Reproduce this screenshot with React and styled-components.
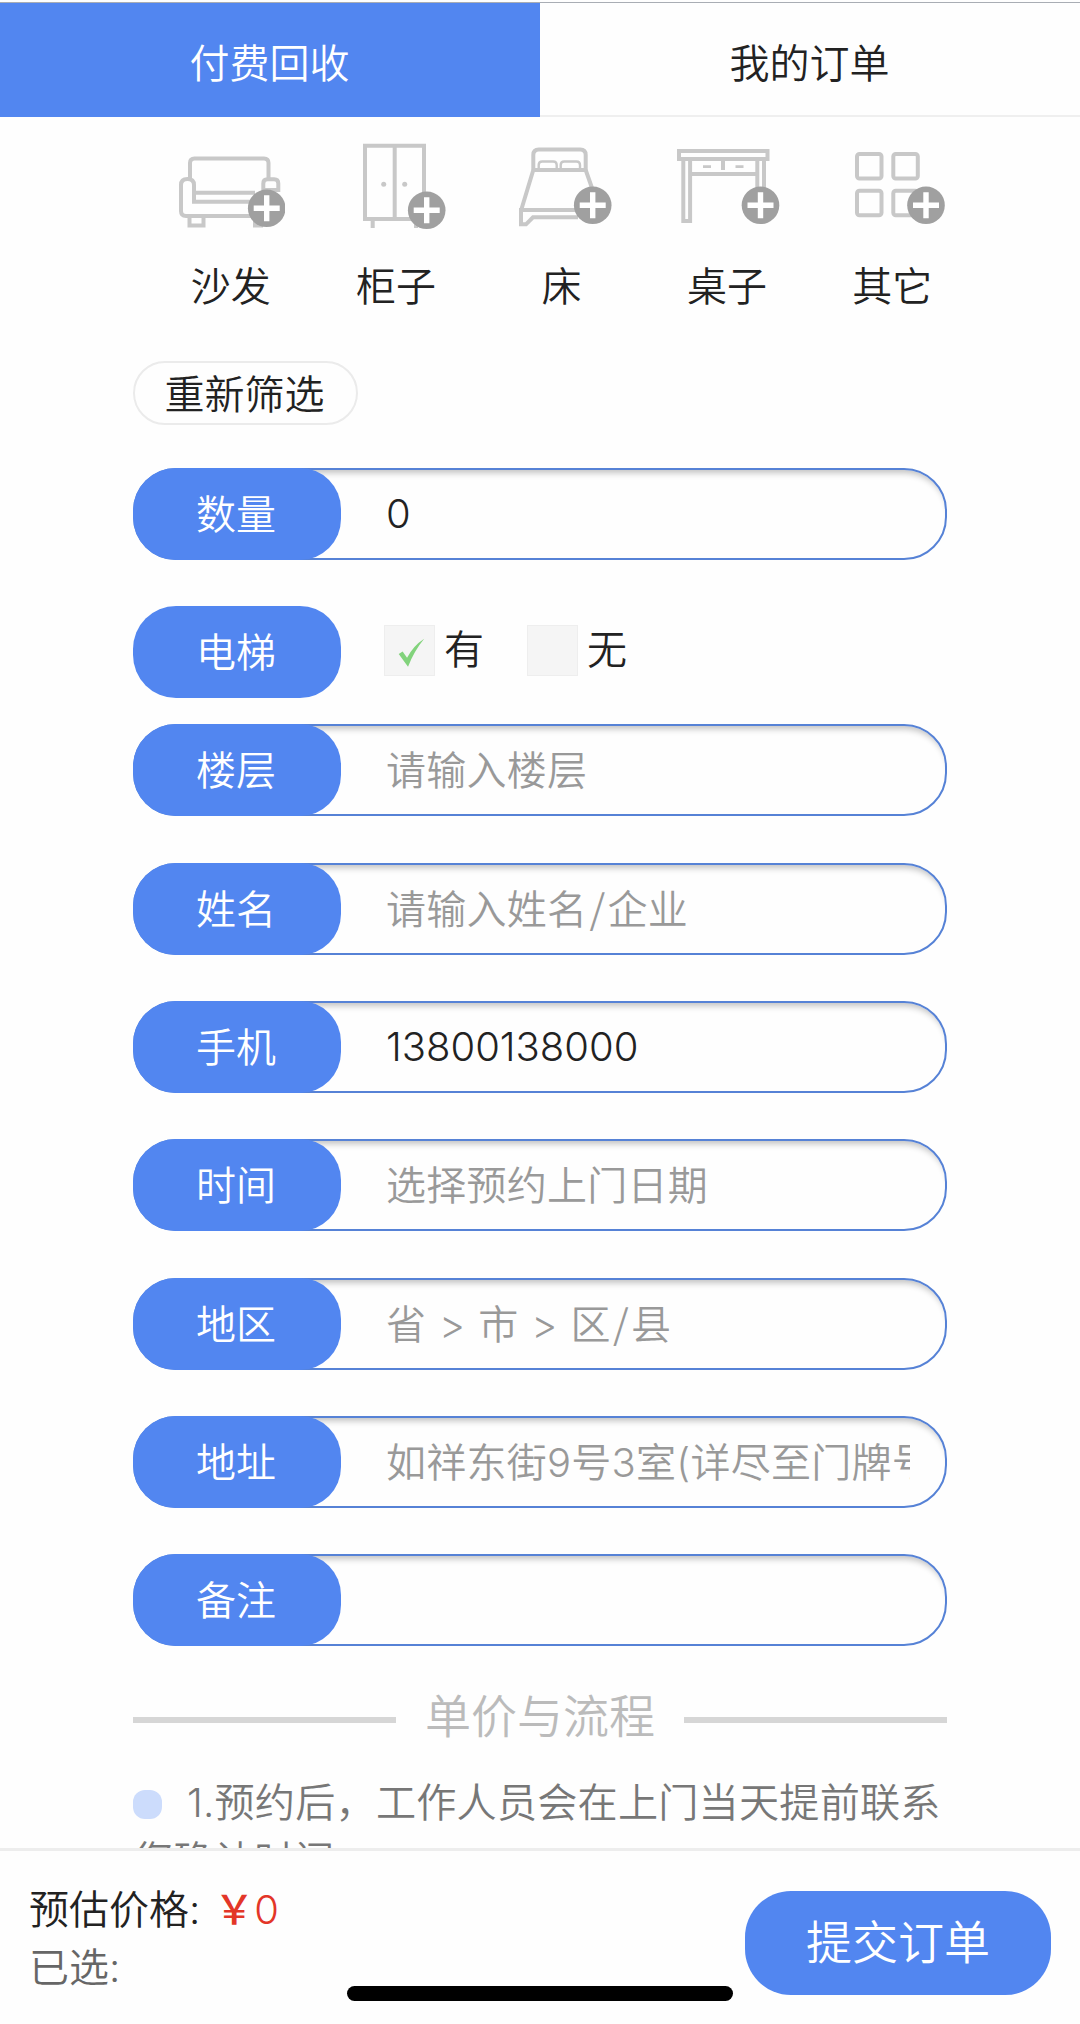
import styled, { createGlobalStyle } from 'styled-components';

const colors = {
  blue: '#5286f0',
  border: '#5682d6',
  text: '#222222',
  muted: '#999999',
  icon: '#c8c8c8',
  badge: '#a0a0a0'
};

const GlobalStyle = createGlobalStyle`
  * {
    box-sizing: border-box;
  }

  body {
    margin: 0;
    background: #fefefe;
    color: ${colors.text};
    font-family: Inter, 'Noto Sans CJK SC', sans-serif;
    font-size: 40px;
    font-weight: 350;
    line-height: 58px;
  }
`;

const Page = styled.div`
  display: flex;
  flex-direction: column;
  height: 2024px;
  overflow: hidden;
`;

const Tabs = styled.nav`
  display: flex;
  flex-shrink: 0;
  height: 115px;
  margin-top: 2px;
  border-top: 1px solid #a9adb4;
`;

const Tab = styled.div`
  flex: 1;
  display: flex;
  align-items: center;
  justify-content: center;
  padding: 9px 1px 0 0;
  background: ${props => (props.$active ? colors.blue : 'transparent')};
  color: ${props => (props.$active ? '#ffffff' : colors.text)};
  border-bottom: 2px solid ${props => (props.$active ? colors.blue : '#efefef')};
`;

const Content = styled.main`
  flex: 1;
  min-height: 0;
  overflow: hidden;
  padding: 0 133px;
`;

const Categories = styled.div`
  display: flex;
  width: 827px;
  margin: 23px 0 0 14px;
`;

const Category = styled.div`
  flex: 1;
  display: flex;
  flex-direction: column;
  align-items: center;
  gap: 28px;
`;

const CategoryName = styled.span`
  padding-left: 2px;
`;

const Icon = styled.svg`
  width: 110px;
  height: 90px;
  fill: none;
  stroke: ${colors.icon};
  stroke-width: 4;
`;

const FilterButton = styled.div`
  display: flex;
  align-items: center;
  justify-content: center;
  width: 225px;
  height: 64px;
  margin-top: 45px;
  padding: 3px 2px 0 0;
  border: 2px solid #ebebeb;
  border-radius: 32px;
`;

const Form = styled.div`
  margin-top: 43px;
`;

const Field = styled.div`
  display: flex;
  width: 813.5px;
  height: 92px;
  margin-bottom: ${props => props.$gap || '46.35px'};
  border-radius: 43px;
  ${props => !props.$plain && `
    border: 2px solid ${colors.border};
    box-shadow: inset 0 8px 6px -5px rgba(0, 0, 0, 0.24);
  `}
`;

const FieldLabel = styled.div`
  display: flex;
  align-items: center;
  justify-content: center;
  flex-shrink: 0;
  width: 208px;
  height: 92px;
  margin: ${props => (props.$plain ? '0' : '-2px 0 0 -2px')};
  padding: 2px 2px 0 0;
  border-radius: 43px 41px 41px 43px;
  background: ${colors.blue};
  color: #ffffff;
`;

const FieldValue = styled.div`
  width: 524px;
  margin-left: 45px;
  line-height: ${props => (props.$placeholder ? '90px' : '87px')};
  white-space: nowrap;
  overflow: hidden;
  color: ${props => (props.$placeholder ? colors.muted : colors.text)};
  letter-spacing: ${props => (props.$placeholder ? '0.25px' : '0')};
  word-spacing: ${props => (props.$placeholder ? '1.3px' : '0')};
`;

const Slash = styled.span`
  padding: 0 2.2px;
  font-family: 'Noto Sans CJK SC', sans-serif;
  line-height: 1;
`;

const Options = styled.div`
  display: flex;
  align-items: center;
  gap: 43px;
  margin: -4px 0 0 43px;
`;

const Option = styled.div`
  display: flex;
  align-items: center;
  gap: 9px;
`;

const CheckBox = styled.svg`
  width: 51px;
  height: 51px;
  border: 1px solid #eeeeee;
  background: #f5f5f5;
`;

const SectionTitle = styled.div`
  display: flex;
  align-items: center;
  justify-content: space-between;
  width: 814px;
  height: 60px;
  margin-top: -7px;
  color: #bbbbbb;
  font-size: 46px;
`;

const Rule = styled.div`
  width: 263px;
  height: 6px;
  margin-top: 9px;
  background: #d6d6d6;
`;

const Note = styled.p`
  width: 820px;
  margin: 28px 0 0;
  color: #777777;
  font-size: 40.15px;
  letter-spacing: 0.2px;
`;

const Bullet = styled.span`
  display: inline-block;
  width: 29px;
  height: 29px;
  margin-right: 25px;
  border-radius: 12px;
  background: #ccdcfc;
  vertical-align: -2px;
`;

const Footer = styled.footer`
  position: relative;
  display: flex;
  justify-content: space-between;
  flex-shrink: 0;
  height: 176px;
  padding: 30px 29px 0;
  border-top: 3px solid #ededed;
  background: #fefefe;
`;

const Selected = styled.div`
  color: #666666;
`;

const Price = styled.span`
  margin-left: 14px;
  color: #e33628;
`;

const Yen = styled.span`
  font-weight: 450;
`;

const SubmitButton = styled.div`
  display: flex;
  align-items: center;
  justify-content: center;
  width: 306px;
  height: 104px;
  margin-top: 10px;
  padding-bottom: 2px;
  border-radius: 46px;
  background: ${colors.blue};
  color: #ffffff;
  font-size: 46px;
`;

const HomeIndicator = styled.div`
  position: absolute;
  left: 347px;
  bottom: 23px;
  width: 386px;
  height: 15px;
  border-radius: 8px;
  background: #000000;
`;

const AddBadge = ({ x, y }) => (
  <g stroke="none">
    <circle cx={x} cy={y} r="18.8" fill={colors.badge} />
    <path d={`M${x - 13} ${y}h26M${x} ${y - 13}v26`} stroke="#fff" strokeWidth="5.4" />
  </g>
);

const categories = [
  {
    name: '沙发',
    icon: (
      <Icon viewBox="0 0 110 90">
        <path d="M15 39V23q0-4.500 4.500-4.500h69.500q4.500 0 4.500 4.500V39" />
        <path d="M80 76H11q-5 0-5-5V45q0-6 6.500-6t6.500 6V61.700H80M19 52.700H80" />
        <path d="M88.300 50V43.500q0-4.200 4.200-4.200h6.600q4.200 0 4.200 4.200V50z" />
        <path d="M14.500 77v8.500h14V77M80 77v8.500h8" />
        <AddBadge x={91.7} y={68.3} />
      </Icon>
    )
  },
  {
    name: '柜子',
    icon: (
      <Icon viewBox="0 0 110 90">
        <path d="M25 5.700H84V79H25zM54.700 5.700V79M32.700 80v8M76 80v8" />
        <circle cx="43.7" cy="44.300" r="2.500" fill={colors.icon} stroke="none" />
        <circle cx="64.7" cy="44.300" r="2.500" fill={colors.icon} stroke="none" />
        <AddBadge x={86.7} y={70.3} />
      </Icon>
    )
  },
  {
    name: '床',
    icon: (
      <Icon viewBox="0 0 110 90">
        <path d="M27.300 30V15q0-5.500 5.500-5.500h41.400q5.500 0 5.500 5.500V30M27.300 30H79.700" />
        <path d="M32.700 30v-5q0-3.500 3.500-3.500h11q3.500 0 3.500 3.500v5M54.700 30v-5q0-3.500 3.500-3.500h12.300q3.500 0 3.500 3.500v5" strokeWidth="2.400" />
        <path d="M27.300 30L15.500 69M79.700 30l7 20M70 70H15v14.300h5l7-7H72" />
        <AddBadge x={86.7} y={65.3} />
      </Icon>
    )
  },
  {
    name: '桌子',
    icon: (
      <Icon viewBox="0 0 110 90">
        <path d="M8 11H96.500v8H8zM12.300 19V81h6.800V19M86.300 19V50M93 19V50M19 34H86M52 19v11" />
        <path d="M32 26.700h8M64.500 26.700h8" strokeWidth="2.800" />
        <AddBadge x={89.5} y={65.3} />
      </Icon>
    )
  },
  {
    name: '其它',
    icon: (
      <Icon viewBox="0 0 110 90">
        <rect x="21" y="14" width="24.500" height="24.500" rx="2.500" />
        <rect x="57.300" y="14" width="24.500" height="24.500" rx="2.500" />
        <rect x="21" y="50.700" width="24.500" height="24.500" rx="2.500" />
        <rect x="57.300" y="50.700" width="24.500" height="24.500" rx="2.500" />
        <AddBadge x={90} y={65.3} />
      </Icon>
    )
  }
];

const fields = [
  { label: '楼层', placeholder: '请输入楼层' },
  { label: '姓名', placeholder: <>请输入姓名<Slash>/</Slash>企业</> },
  { label: '手机', value: '13800138000' },
  { label: '时间', placeholder: '选择预约上门日期' },
  { label: '地区', placeholder: <>省 &gt; 市 &gt; 区<Slash>/</Slash>县</> },
  { label: '地址', placeholder: '如祥东街9号3室(详尽至门牌号)' },
  { label: '备注' }
];

const FormField = ({ label, value, placeholder }) => (
  <Field>
    <FieldLabel>{label}</FieldLabel>
    <FieldValue $placeholder={!value}>{value || placeholder}</FieldValue>
  </Field>
);

const App = () => {
  return (
    <>
      <GlobalStyle />
      <Page>
        <Tabs>
          <Tab $active>付费回收</Tab>
          <Tab>我的订单</Tab>
        </Tabs>

        <Content>
          <Categories>
            {categories.map(category => (
              <Category key={category.name}>
                {category.icon}
                <CategoryName>{category.name}</CategoryName>
              </Category>
            ))}
          </Categories>

          <FilterButton>重新筛选</FilterButton>

          <Form>
            <FormField label="数量" value="0" />
            <Field $plain $gap="26px">
              <FieldLabel $plain>电梯</FieldLabel>
              <Options>
                <Option>
                  <CheckBox viewBox="0 0 50 50">
                    <path d="M14 28.500l4-2.500 4.500 6.500Q29 20 40 13Q30 25 23.500 41.500z" fill="#82d37c" />
                  </CheckBox>
                  有
                </Option>
                <Option>
                  <CheckBox viewBox="0 0 50 50" />
                  无
                </Option>
              </Options>
            </Field>
            {fields.map(field => (
              <FormField key={field.label} {...field} />
            ))}
          </Form>

          <SectionTitle>
            <Rule />
            单价与流程
            <Rule />
          </SectionTitle>
          <Note>
            <Bullet />
            1.预约后，工作人员会在上门当天提前联系您确认时间。
          </Note>
        </Content>

        <Footer>
          <div>
            <div>
              预估价格:<Price><Yen>￥</Yen>0</Price>
            </div>
            <Selected>已选:</Selected>
          </div>
          <SubmitButton>提交订单</SubmitButton>
          <HomeIndicator />
        </Footer>
      </Page>
    </>
  );
};

export default App;
